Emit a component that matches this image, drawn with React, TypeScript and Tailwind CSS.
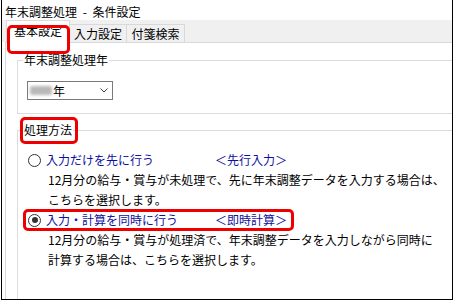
// 年末調整処理 - 条件設定 dialog

function Radio({ checked }: { checked?: boolean }) {
  return (
    <span className="flex h-[13px] w-[13px] shrink-0 items-center justify-center rounded-full border border-[#333333] bg-white">
      {checked && <span className="h-[6px] w-[6px] rounded-full bg-[#333333]" />}
    </span>
  );
}

export default function App() {
  return (
    <div className="h-[301px] w-[454px] overflow-hidden bg-white font-['Noto_Sans_CJK_JP','Noto_Sans',sans-serif] text-[12px] text-black">
      <div className="ml-[1px] flex h-[300px] w-[452px] flex-col overflow-hidden border-x border-b border-black">
        {/* TITLE */}
        <div className="h-[28px] pl-[3px] pt-[4px] leading-[16px]">
          年末調整処理<span className="mx-[3px]"> - </span>条件設定
        </div>

        {/* TABS */}
        <div className="relative flex h-[30px] items-end bg-[#f0f0f0] pl-[4px]">
          <div className="relative z-10 -mb-[1px] flex h-[23px] w-[64px] items-center justify-center border-x border-t border-[#d9d9d9] bg-white pb-[2px] leading-[14px]">
            基本設定
          </div>
          <div className="flex h-[18px] w-[57px] items-center justify-center border-r border-t border-[#d9d9d9] leading-[14px]">
            入力設定
          </div>
          <div className="flex h-[18px] w-[58px] items-center justify-center border-r border-t border-[#d9d9d9] leading-[14px]">
            付箋検索
          </div>
          <div className="absolute left-[5px] top-[5px] z-20 h-[29px] w-[63px] rounded-[5px] border-[3px] border-[#ee0000]" />
        </div>

        {/* PAGE */}
        <div className="ml-[3px] flex-1 border-l border-t border-[#d9d9d9] bg-white">
          <fieldset className="ml-[11px] mt-[11px] border border-r-0 border-[#dcdcdc]">
            <legend className="ml-[5px] px-[1px] leading-[12px]">年末調整処理年</legend>
            <div className="pb-[13px] pl-[9px] pt-[15px]">
              <div className="flex h-[19px] w-[86px] items-center border border-[#7a7a7a] pl-[2px]">
                <span className="h-[9px] w-[22px] rounded-[2px] bg-[#b8b8b8] blur-[1.5px]" />
                <span className="ml-[1px] leading-[14px]">年</span>
                <svg className="ml-auto mr-[4px]" width="8" height="5" viewBox="0 0 8 5">
                  <path d="M0.5 0.5 L4 4 L7.5 0.5" fill="none" stroke="#404040" strokeWidth="1" />
                </svg>
              </div>
            </div>
          </fieldset>

          <fieldset className="ml-[11px] mt-[10px] h-[200px] border-l border-t border-[#dcdcdc]">
            <legend className="relative ml-[5px] px-[1px] leading-[12px]">
              処理方法
              <span className="absolute -left-[3px] -top-[7px] h-[27px] w-[58px] rounded-[5px] border-[3px] border-[#ee0000]" />
            </legend>
            <div className="pt-[14px]">
              <div className="flex h-[20px] items-center pl-[10px] text-[#1010a0]">
                <Radio />
                <span className="ml-[5px] w-[169px]">入力だけを先に行う</span>
                <span>＜先行入力＞</span>
              </div>
              <div className="pl-[30px] leading-[20px]">
                <p>12月分の給与・賞与が未処理で、先に年末調整データを入力する場合は、</p>
                <p>こちらを選択します。</p>
              </div>

              <div className="relative flex h-[20px] items-center pl-[10px] text-[#1010a0]">
                <Radio checked />
                <span className="ml-[5px] w-[169px]">入力・計算を同時に行う</span>
                <span>＜即時計算＞</span>
                <span className="absolute -top-[1px] left-[5px] h-[22px] w-[271px] rounded-[5px] border-[3px] border-[#ee0000]" />
              </div>
              <div className="pl-[30px] leading-[20px]">
                <p>12月分の給与・賞与が処理済で、年末調整データを入力しながら同時に</p>
                <p>計算する場合は、こちらを選択します。</p>
              </div>
            </div>
          </fieldset>
        </div>
      </div>
    </div>
  );
}
